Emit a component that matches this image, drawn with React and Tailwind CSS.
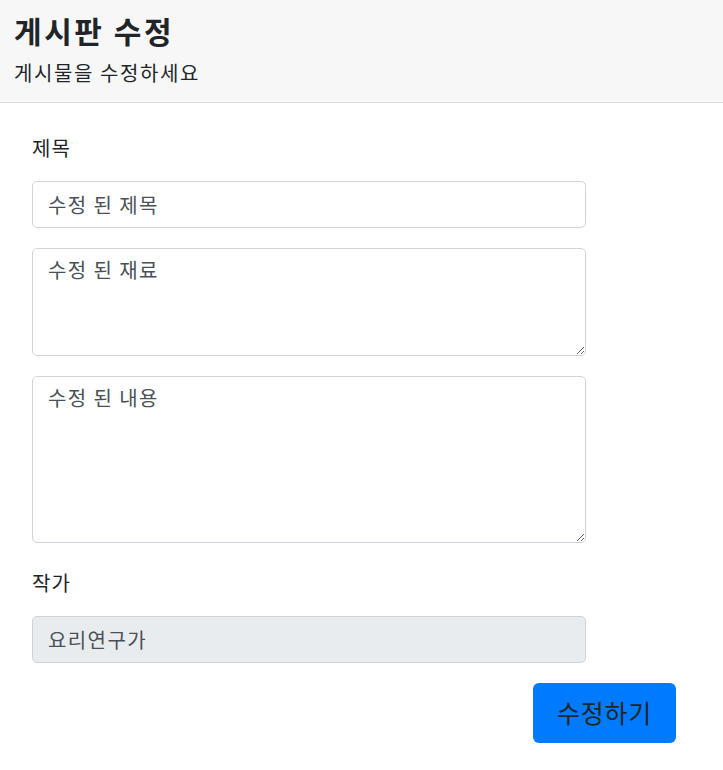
import React, { useState } from "react";

const font = { fontFamily: '"Noto Sans CJK KR", "Noto Sans", sans-serif' };

const App = () => {
  const [title, setTitle] = useState("수정 된 제목");
  const [ingredients, setIngredients] = useState("수정 된 재료");
  const [content, setContent] = useState("수정 된 내용");

  return (
    <div className="min-h-[770px] bg-white text-[#212529] tracking-[0.07em]" style={font}>
      {/* Header */}
      <div className="bg-[#f7f7f7] border-b border-[#dcdcdc] px-[14px] pt-[12px] h-[103px]">
        <h1 className="text-[30px] font-bold leading-[36px] tracking-[0.085em]">게시판 수정</h1>
        <p className="mt-[10px] text-[20px] leading-[30px] tracking-[0.08em]">게시물을 수정하세요</p>
      </div>

      {/* Form */}
      <div className="pl-[32px] pr-[47px] pt-[30px]">
        <div className="w-[554px]">
          <label className="block text-[20px] leading-[30px] mb-[18px]">제목</label>
          <input
            value={title}
            onChange={(e) => setTitle(e.target.value)}
            className="block w-full h-[47px] px-[15px] text-[20px] leading-[30px] tracking-[0.07em] text-[#495057] border border-[#ced4da] rounded-[5px] outline-none mb-[20px]"
          />
          <textarea
            value={ingredients}
            onChange={(e) => setIngredients(e.target.value)}
            className="block w-full h-[108px] px-[15px] py-[6px] text-[20px] leading-[30px] tracking-[0.07em] text-[#495057] border border-[#ced4da] rounded-[5px] outline-none mb-[20px]"
          />
          <textarea
            value={content}
            onChange={(e) => setContent(e.target.value)}
            className="block w-full h-[167px] px-[15px] py-[6px] text-[20px] leading-[30px] tracking-[0.07em] text-[#495057] border border-[#ced4da] rounded-[5px] outline-none mb-[25px]"
          />
          <label className="block text-[20px] leading-[30px] mb-[18px]">작가</label>
          <input
            value="요리연구가"
            readOnly
            className="block w-full h-[47px] px-[15px] text-[20px] leading-[30px] tracking-[0.07em] text-[#495057] bg-[#e9ecef] border border-[#ced4da] rounded-[5px] outline-none mb-[20px]"
          />
        </div>
        <div className="flex justify-end">
          <button className="w-[143px] h-[60px] bg-[#007bff] text-[#212529] text-[25px] tracking-[0.03em] rounded-[6px]">
            수정하기
          </button>
        </div>
      </div>
    </div>
  );
};

export default App;
